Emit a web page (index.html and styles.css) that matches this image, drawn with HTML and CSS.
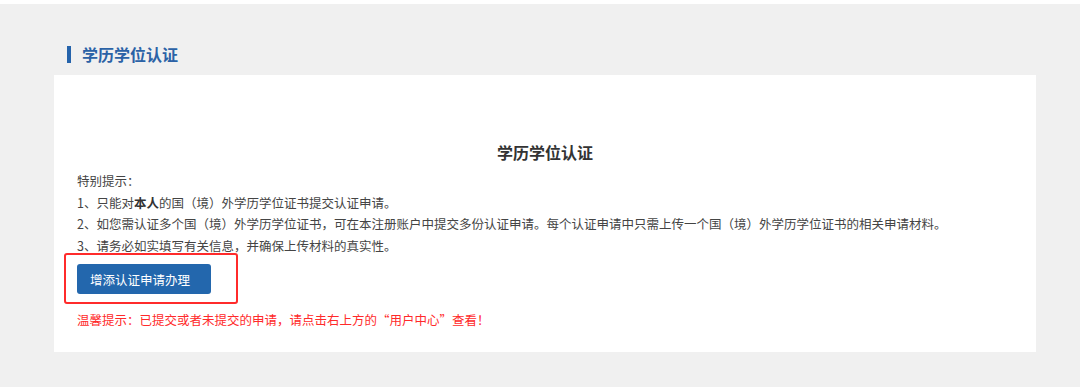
FILE: index.html
```html
<!DOCTYPE html>
<html lang="zh-CN">
<head>
<meta charset="utf-8">
<title>学历学位认证</title>
<link rel="stylesheet" href="styles.css">
</head>
<body>
<div class="page">
  <h2 class="section-head"><span class="bar"></span><span class="section-title">学历学位认证</span></h2>
  <div class="card">
    <h3 class="card-title">学历学位认证</h3>
    <div class="notes">
      <p>特别提示：</p>
      <p>1、只能对<b>本人</b>的国（境）外学历学位证书提交认证申请。</p>
      <p>2、如您需认证多个国（境）外学历学位证书，可在本注册账户中提交多份认证申请。每个认证申请中只需上传一个国（境）外学历学位证书的相关申请材料。</p>
      <p>3、请务必如实填写有关信息，并确保上传材料的真实性。</p>
    </div>
    <div class="btn-wrap"><button class="btn" type="button">增添认证申请办理</button></div>
    <p class="warn">温馨提示：已提交或者未提交的申请，请点击右上方的“用户中心”查看！</p>
  </div>
</div>
</body>
</html>
```

FILE: styles.css
```css
html, body {
  margin: 0;
  padding: 0;
  background: #ffffff;
  font-family: "Noto Sans CJK SC", "Microsoft YaHei", sans-serif;
}
.page {
  margin-top: 4px;
  background: #f0f0f0;
  padding: 38px 44px 35px 54px;
}
.section-head {
  display: flex;
  align-items: center;
  margin: 0 0 9px 0;
  height: 24px;
  font-size: 16px;
  font-weight: bold;
  color: #2b62a6;
}
.bar {
  width: 4px;
  height: 17px;
  background: #2563ab;
  margin-left: 13px;
  margin-right: 11px;
}
.section-title {
  line-height: 24px;
}
.card {
  background: #ffffff;
  padding: 65px 23px 21px 23px;
  color: #444444;
  font-size: 12.5px;
}
.card-title {
  margin: 0 0 6px 0;
  text-align: center;
  font-size: 16px;
  line-height: 24px;
  font-weight: bold;
  color: #333333;
}
.notes p {
  margin: 0;
  line-height: 21.5px;
}
.notes b {
  font-weight: bold;
  color: #333333;
}
.btn-wrap {
  position: relative;
  display: inline-block;
  margin-top: 8px;
  vertical-align: top;
}
.btn-wrap::after {
  content: "";
  position: absolute;
  left: -13px;
  right: -27px;
  top: -11px;
  bottom: -10px;
  border: 2px solid #ff2b2b;
  border-radius: 3px;
  pointer-events: none;
}
.btn {
  display: block;
  width: 134px;
  height: 30px;
  padding: 0 13px;
  border: none;
  border-radius: 3px;
  background: #2367ad;
  color: #ffffff;
  font-family: inherit;
  font-size: 12.5px;
  text-align: left;
}
.warn {
  margin: 15px 0 0 0;
  line-height: 21.5px;
  color: #ff2a2a;
}
```
